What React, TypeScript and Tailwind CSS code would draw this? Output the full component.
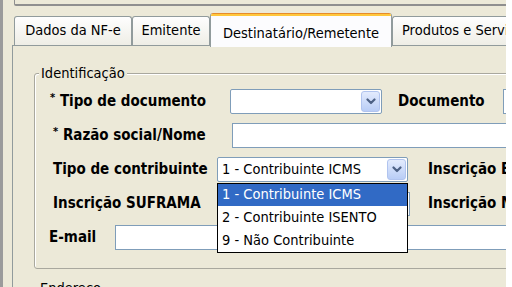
const font = { fontFamily: '"DejaVu Sans Condensed", "DejaVu Sans", sans-serif' };

function Arrow() {
  return (
    <div className="w-[19px] h-[21px] shrink-0 rounded-[3px] border border-[#b1c4ef] bg-linear-to-b from-[#e3ebfd] to-[#b9cdf6] flex items-center justify-center">
      <svg width="10" height="7" viewBox="0 0 10 7">
        <path d="M1.5 1.5L5 5L8.5 1.5" stroke="#4d6185" strokeWidth="2.2" fill="none" strokeLinecap="round" strokeLinejoin="round" />
      </svg>
    </div>
  );
}

function Tab({ label, width, active }: { label: string; width: string; active?: boolean }) {
  if (active) {
    return (
      <div className={`${width} shrink-0 h-[34px] relative z-10 bg-[#fcfcfe] border-x border-[#919b9c] rounded-t-[3px] overflow-hidden flex flex-col`}>
        <div className="h-[1px] bg-[#e68b2c]" />
        <div className="h-[2px] bg-[#ffc73c]" />
        <div className="flex-1 flex items-start pt-[7px] justify-center text-[14.5px] text-black">{label}</div>
      </div>
    );
  }
  return (
    <div className={`${width} shrink-0 h-[30px] mt-[3px] border-x border-t border-[#919b9c] rounded-t-[3px] bg-linear-to-b from-[#fefefe] to-[#eeede5] flex items-center justify-center text-[14.5px] text-black pb-[1px]`}>
      {label}
    </div>
  );
}

export default function App() {
  return (
    <div className="w-[512px] h-[287px] overflow-hidden bg-white flex" style={font}>
      <div className="w-[3px] shrink-0 bg-[#9b9b9b]" />
      <div className="w-[503px] shrink-0 bg-[#ece9d8] flex flex-col overflow-hidden">
        <div className="shrink-0 ml-[11px] h-[6px] border-l border-b-2 border-[#8f8f8f] rounded-bl-[2px]" />
        <div className="shrink-0 ml-[9px] mt-[7px] flex flex-col">
          <div className="shrink-0 flex h-[34px] pl-[2px] items-start">
            <Tab label="Dados da NF-e" width="w-[118px]" />
            <Tab label="Emitente" width="w-[78px]" />
            <Tab label="Destinatário/Remetente" width="w-[182px]" active />
            <div className="w-[120px] shrink-0 h-[30px] mt-[3px] border-l border-t border-[#919b9c] rounded-tl-[3px] bg-linear-to-b from-[#fefefe] to-[#eeede5] flex items-center pl-[9px] text-[14.5px] text-black pb-[1px] whitespace-nowrap">
              Produtos e Serviços
            </div>
          </div>
          <div className="shrink-0 -mt-[2px] border-l border-t border-[#919b9c] pl-[21px] pt-[27px]">
            <div className="relative w-[520px] h-[196px] border border-[#a9a89e] rounded-[3px] shadow-[inset_1px_1px_0_#fff] pl-[15px] pt-[15px] flex flex-col gap-[9px]">
              <span className="absolute -top-[10px] left-[4px] px-[2px] bg-[#ece9d8] text-[14.5px] leading-[18px] text-black">Identificação</span>

              <div className="flex items-center h-[25px]">
                <div className="w-[180px] shrink-0 font-bold text-[15px] text-black whitespace-nowrap">
                  <span className="text-[11px] align-top">*</span> Tipo de documento
                </div>
                <div className="w-[152px] shrink-0 h-[25px] bg-white border border-[#7f9db9] rounded-[2px] flex items-center justify-end pr-[1px]">
                  <Arrow />
                </div>
                <div className="ml-[16px] shrink-0 font-bold text-[15px] text-black">Documento</div>
                <div className="ml-[18px] shrink-0 w-[100px] h-[25px] bg-white border border-[#7f9db9]" />
              </div>

              <div className="flex items-center h-[25px]">
                <div className="w-[182px] shrink-0 pl-[3px] font-bold text-[15px] text-black whitespace-nowrap">
                  <span className="text-[11px] align-top">*</span> Razão social/Nome
                </div>
                <div className="w-[300px] shrink-0 h-[25px] bg-white border border-[#7f9db9]" />
              </div>

              <div className="flex items-center h-[25px]">
                <div className="w-[167px] shrink-0 pl-[3px] font-bold text-[15px] text-black whitespace-nowrap">Tipo de contribuinte</div>
                <div className="relative shrink-0 w-[191px] h-[25px] bg-white border border-[#7f9db9] rounded-[2px] flex items-center pr-[1px]">
                  <span className="flex-1 pl-[4px] text-[14.5px] text-black whitespace-nowrap">1 - Contribuinte ICMS</span>
                  <Arrow />
                  <div className="absolute z-20 left-[-1px] top-[25px] w-[191px] bg-white border border-black text-[14.5px] text-black flex flex-col">
                    <div className="h-[22px] bg-[#316ac5] text-white pl-[4px] flex items-center">1 - Contribuinte ICMS</div>
                    <div className="h-[23px] pl-[4px] flex items-center">2 - Contribuinte ISENTO</div>
                    <div className="h-[23px] pl-[4px] flex items-center">9 - Não Contribuinte</div>
                  </div>
                </div>
                <div className="ml-[20px] shrink-0 font-bold text-[15px] text-black whitespace-nowrap">Inscrição Estadual</div>
              </div>

              <div className="flex items-center h-[25px]">
                <div className="w-[167px] shrink-0 pl-[3px] font-bold text-[15px] text-black whitespace-nowrap">Inscrição SUFRAMA</div>
                <div className="w-[193px] shrink-0 h-[24px] bg-white border border-[#7f9db9]" />
                <div className="ml-[18px] shrink-0 font-bold text-[15px] text-black whitespace-nowrap">Inscrição Municipal</div>
              </div>

              <div className="flex items-center h-[25px]">
                <div className="w-[66px] shrink-0 -ml-[1px] font-bold text-[15px] text-black">E-mail</div>
                <div className="w-[400px] shrink-0 h-[25px] bg-white border border-[#7f9db9]" />
              </div>
            </div>
            <div className="mt-[9px] ml-[6px] text-[14.5px] text-black">Endereço</div>
          </div>
        </div>
      </div>
    </div>
  );
}
